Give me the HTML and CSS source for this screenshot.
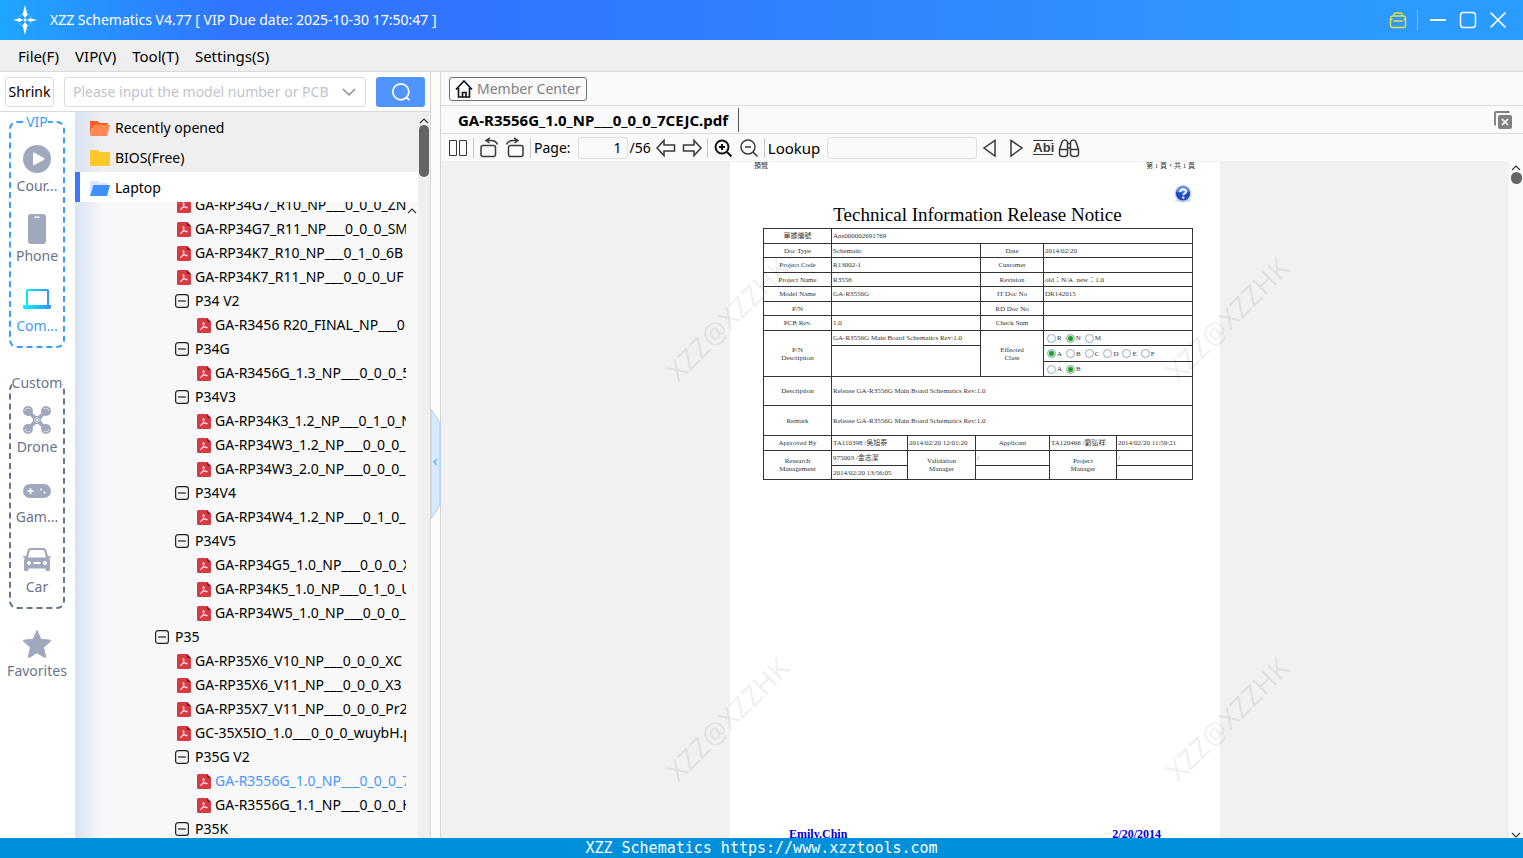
FILE: index.html
```html
<!DOCTYPE html>
<html lang="en">
<head>
<meta charset="utf-8">
<title>XZZ Schematics</title>
<link rel="stylesheet" href="styles.css">
</head>
<body>
<svg class="sprite" aria-hidden="true">
  <symbol id="pdf" viewBox="0 0 14 15"><path d="M1.500 0H10l4 4v9.500a1.500 1.500 0 0 1-1.500 1.500h-11A1.500 1.500 0 0 1 0 13.500v-12A1.500 1.500 0 0 1 1.500 0z" fill="#d63a43"/><path d="M10 0l4 4h-3a1 1 0 0 1-1-1z" fill="#8e1219"/><path d="M6.600 4.300c1 .2.400 2.300 0 3.300-.6 1.600-1.700 3.600-2.700 4-.9.200-.5-1 1-1.700 1.400-.7 3.800-1 5-.8 1 .3.300 1.100-.8.700-1.200-.5-2.700-2.200-3-3.600-.2-.9-.1-1.900.5-1.900z" fill="none" stroke="#fff" stroke-width=".8"/></symbol>
  <symbol id="minus" viewBox="0 0 14 14"><rect x=".6" y=".6" width="12.800" height="12.800" rx="2.500" fill="#f4f4f4" stroke="#222" stroke-width="1.200"/><path d="M3 7h8" stroke="#222" stroke-width="1.200"/></symbol>
  <symbol id="up" viewBox="0 0 10 6"><path d="M1 5l4-4 4 4" fill="none" stroke="#333" stroke-width="1.100"/></symbol>
  <symbol id="folder-open" viewBox="0 0 20 16"><path d="M0 1h8l1.500 2H18v5H2L0 15z" fill="var(--back)"/><path d="M3.500 5H20l-3 11H0z" fill="var(--front)"/></symbol>
</svg>

<header class="titlebar">
  <svg class="logo" viewBox="0 0 24 30"><circle cx="12" cy="15" r="6.500" fill="none" stroke="#7fbcff" stroke-width="1"/><path d="M12 0l2.500 9.500L12 13 9.500 9.500zM12 30l2.500-9.500L12 17l-2.500 3.500zM0 15l7-1.800L10 15l-3 1.800zM24 15l-7-1.800L14 15l3 1.800z" fill="#fff"/><circle cx="12" cy="15" r="1.500" fill="#fff"/></svg>
  <h1 class="title">XZZ Schematics V4.77 [ VIP Due date: 2025-10-30 17:50:47 ]</h1>
  <button class="win" aria-label="Toolbox"><svg viewBox="0 0 18 18"><path d="M5 5V3.500A1.500 1.500 0 0 1 6.500 2h5A1.500 1.500 0 0 1 13 3.500V5M3.500 5h11A2.500 2.500 0 0 1 16.500 7.500v7a2 2 0 0 1-2 2h-11a2 2 0 0 1-2-2v-7A2.500 2.500 0 0 1 3.500 5zM1.500 8.500h2M14.500 8.500h2M4.500 10h9" fill="none" stroke="#e6e23c" stroke-width="1.400"/></svg></button>
  <span class="win-sep"></span>
  <button class="win" aria-label="Minimize"><svg viewBox="0 0 18 18"><path d="M1 9h16" stroke="#fff" stroke-width="1.800"/></svg></button>
  <button class="win" aria-label="Maximize"><svg viewBox="0 0 18 18"><rect x="1.500" y="1.500" width="15" height="15" rx="3" fill="none" stroke="#fff" stroke-width="1.400"/></svg></button>
  <button class="win" aria-label="Close"><svg viewBox="0 0 18 18"><path d="M1.500 1.500l15 15M16.500 1.500l-15 15" stroke="#fff" stroke-width="1.700"/></svg></button>
</header>

<nav class="menubar">
  <button>File(F)</button><button>VIP(V)</button><button>Tool(T)</button><button>Settings(S)</button>
</nav>

<main class="workspace">
  <section class="side">
    <form class="search">
      <button type="button" class="shrink">Shrink</button>
      <div class="combo">
        <input type="text" aria-label="Model number" placeholder="Please input the model number or PCB">
        <svg class="chev" viewBox="0 0 14 8"><path d="M1 1l6 6 6-6" fill="none" stroke="#8a8f99" stroke-width="1.500"/></svg>
      </div>
      <button type="button" class="go" aria-label="Search"><svg viewBox="0 0 20 20"><circle cx="9.800" cy="9.800" r="8" fill="none" stroke="#fff" stroke-width="1.700"/><path d="M14.800 15l3.500 3" stroke="#fff" stroke-width="1.700"/></svg></button>
    </form>
    <div class="side-body">
      <nav class="rail">
        <fieldset class="group vip">
          <legend>VIP</legend>
          <button class="item"><svg viewBox="0 0 28 30"><circle cx="14" cy="15" r="14" fill="#a0a8bd"/><path d="M10 9.500q0-1.500 1.400-.8l9.500 5.300q1.300.8 0 1.700l-9.500 5.400q-1.400.7-1.400-.9z" fill="#fff"/></svg><span>Cour...</span></button>
          <button class="item"><svg viewBox="0 0 28 30"><rect x="5" y="0" width="18" height="30" rx="3" fill="#a0a8bd"/><path d="M12 3.300h4" stroke="#fff" stroke-width="1.400" stroke-linecap="round"/></svg><span>Phone</span></button>
          <button class="item on"><svg viewBox="0 0 28 30"><defs><linearGradient id="lg"><stop offset="0" stop-color="#00f6ff"/><stop offset="1" stop-color="#3a8dff"/></linearGradient></defs><path fill-rule="evenodd" d="M4.500 5h20q1.500 0 1.500 1.500V21h2v2.500q0 1.500-1.500 1.500h-25Q0 25 0 23.500V21h3V6.500Q3 5 4.500 5zM5 7v14h19V7z" fill="url(#lg)"/></svg><span>Com...</span></button>
        </fieldset>
        <fieldset class="group custom">
          <legend>Custom</legend>
          <button class="item"><svg viewBox="0 0 28 30"><g fill="#a0a8bd"><path d="M6 5l7 6h2l7-6 2 2-6 7v2l6 7-2 2-7-6h-2l-7 6-2-2 6-7v-2L4 7z"/><circle cx="5" cy="6" r="5"/><circle cx="23" cy="6" r="5"/><circle cx="5" cy="24" r="5"/><circle cx="23" cy="24" r="5"/></g><g fill="none" stroke="#e4e8f1" stroke-width=".8"><path d="M2.200 6a3 3 0 0 1 5.300-1.800M20.500 4.200a3 3 0 0 1 5.300 1.800M2.200 24a3 3 0 0 0 5.300 1.800M20.500 25.800a3 3 0 0 0 5.300-1.800"/><circle cx="14" cy="15" r="2.300"/></g><circle cx="14" cy="15" r=".9" fill="#fff"/></svg><span>Drone</span></button>
          <button class="item"><svg viewBox="0 0 28 30"><rect y="9" width="28" height="14" rx="7" fill="#a0a8bd"/><path d="M4.500 16h6M7.500 13v6" stroke="#fff" stroke-width="1.600"/><circle cx="18" cy="14.500" r="1.100" fill="#fff"/><circle cx="21.500" cy="17.500" r="1.100" fill="#fff"/></svg><span>Gam...</span></button>
          <button class="item"><svg viewBox="0 0 28 30"><path fill-rule="evenodd" fill="#a0a8bd" d="M7.500 3h13q2 0 2.700 2l2 6.500 2.300-1q1 1.800-1.300 2.800.8.700.8 2V25q0 1-1 1h-2.500q-1 0-1-1v-1.500h-17V25q0 1-1 1H2q-1 0-1-1v-9.700q0-1.300.8-2Q-.5 12.300.5 10.500l2.300 1 2-6.500Q5.500 3 7.500 3zM8 5q-1 0-1.300 1L5 12.500h18L21.300 6Q21 5 20 5zM6 16a2 2 0 1 0 .1 0zM22 16a2 2 0 1 0 .1 0zM10.500 17v2h7v-2z"/></svg><span>Car</span></button>
        </fieldset>
        <button class="item fav"><svg viewBox="0 0 28 30"><path d="M14 1.500l3.800 8.700 9.500 1q.8.200.3.900l-7 6.500 2 9.200q0 1-.9.600L14 23.700l-7.700 4.700q-.9.400-.9-.6l2-9.200-7-6.500q-.5-.7.300-.9l9.500-1z" fill="#a0a8bd" stroke="#a0a8bd" stroke-linejoin="round"/></svg><span>Favorites</span></button>
      </nav>
      <div class="browser">
        <div class="content">
          <button class="cat"><svg class="fold-o" viewBox="0 0 20 16"><use href="#folder-open"/></svg>Recently opened</button>
          <button class="cat"><svg viewBox="0 0 20 16"><path d="M0 0h8l1.500 2H20v14H0z" fill="#ffc82c"/></svg>BIOS(Free)</button>
          <button class="cat active"><svg class="fold-b" viewBox="0 0 20 16"><use href="#folder-open"/></svg>Laptop</button>
          <div class="tree-view">
            <ul class="tree">
              <li class="l2"><svg class="pdf"><use href="#pdf"/></svg><a href="#">GA-RP34G7_R10_NP___0_0_0_ZN</a></li>
              <li class="l2"><svg class="pdf"><use href="#pdf"/></svg><a href="#">GA-RP34G7_R11_NP___0_0_0_SM</a></li>
              <li class="l2"><svg class="pdf"><use href="#pdf"/></svg><a href="#">GA-RP34K7_R10_NP___0_1_0_6B</a></li>
              <li class="l2"><svg class="pdf"><use href="#pdf"/></svg><a href="#">GA-RP34K7_R11_NP___0_0_0_UF</a></li>
              <li class="l2"><svg class="box"><use href="#minus"/></svg><a href="#">P34 V2</a></li>
              <li class="l3"><svg class="pdf"><use href="#pdf"/></svg><a href="#">GA-R3456 R20_FINAL_NP___0</a></li>
              <li class="l2"><svg class="box"><use href="#minus"/></svg><a href="#">P34G</a></li>
              <li class="l3"><svg class="pdf"><use href="#pdf"/></svg><a href="#">GA-R3456G_1.3_NP___0_0_0_5</a></li>
              <li class="l2"><svg class="box"><use href="#minus"/></svg><a href="#">P34V3</a></li>
              <li class="l3"><svg class="pdf"><use href="#pdf"/></svg><a href="#">GA-RP34K3_1.2_NP___0_1_0_N</a></li>
              <li class="l3"><svg class="pdf"><use href="#pdf"/></svg><a href="#">GA-RP34W3_1.2_NP___0_0_0_</a></li>
              <li class="l3"><svg class="pdf"><use href="#pdf"/></svg><a href="#">GA-RP34W3_2.0_NP___0_0_0_</a></li>
              <li class="l2"><svg class="box"><use href="#minus"/></svg><a href="#">P34V4</a></li>
              <li class="l3"><svg class="pdf"><use href="#pdf"/></svg><a href="#">GA-RP34W4_1.2_NP___0_1_0_</a></li>
              <li class="l2"><svg class="box"><use href="#minus"/></svg><a href="#">P34V5</a></li>
              <li class="l3"><svg class="pdf"><use href="#pdf"/></svg><a href="#">GA-RP34G5_1.0_NP___0_0_0_X</a></li>
              <li class="l3"><svg class="pdf"><use href="#pdf"/></svg><a href="#">GA-RP34K5_1.0_NP___0_1_0_U</a></li>
              <li class="l3"><svg class="pdf"><use href="#pdf"/></svg><a href="#">GA-RP34W5_1.0_NP___0_0_0_</a></li>
              <li class="l1"><svg class="box"><use href="#minus"/></svg><a href="#">P35</a></li>
              <li class="l2"><svg class="pdf"><use href="#pdf"/></svg><a href="#">GA-RP35X6_V10_NP___0_0_0_XC</a></li>
              <li class="l2"><svg class="pdf"><use href="#pdf"/></svg><a href="#">GA-RP35X6_V11_NP___0_0_0_X3</a></li>
              <li class="l2"><svg class="pdf"><use href="#pdf"/></svg><a href="#">GA-RP35X7_V11_NP___0_0_0_Pr2</a></li>
              <li class="l2"><svg class="pdf"><use href="#pdf"/></svg><a href="#">GC-35X5IO_1.0___0_0_0_wuybH.p</a></li>
              <li class="l2"><svg class="box"><use href="#minus"/></svg><a href="#">P35G V2</a></li>
              <li class="l3 sel"><svg class="pdf"><use href="#pdf"/></svg><a href="#">GA-R3556G_1.0_NP___0_0_0_7</a></li>
              <li class="l3"><svg class="pdf"><use href="#pdf"/></svg><a href="#">GA-R3556G_1.1_NP___0_0_0_H</a></li>
              <li class="l2"><svg class="box"><use href="#minus"/></svg><a href="#">P35K</a></li>
            </ul>
            <svg class="caret"><use href="#up"/></svg>
          </div>
        </div>
        <div class="vbar"><svg class="caret"><use href="#up"/></svg><span class="thumb"></span></div>
      </div>
    </div>
  </section>

  <div class="splitter"><button class="handle" aria-label="Collapse panel"><svg viewBox="0 0 10 110"><path d="M0 .5l8 12q1 1 1 3v79q0 2-1 3l-8 12z" fill="#d8eaff" stroke="#9dcdf8"/><path d="M6 50L3 53l3 3" fill="none" stroke="#5cb0f2" stroke-width="1.300"/></svg></button></div>

  <section class="reader">
    <div class="top"><button class="member"><svg viewBox="0 0 18 18"><path d="M1 9.500L9 1l8 8.500M3.500 8v9h11V8M7.500 17v-4.500h3.500V17" fill="none" stroke="#111" stroke-width="1.600"/></svg>Member Center</button></div>
    <div class="tabs">
      <button class="tab">GA-R3556G_1.0_NP___0_0_0_7CEJC.pdf</button>
      <button class="close-all" aria-label="Close all"><svg viewBox="0 0 18 18"><path d="M1 14.500V2q0-1 1-1h13.500" fill="none" stroke="#808080" stroke-width="1.900"/><rect x="4" y="4" width="14" height="14" rx="2" fill="#808080"/><path d="M8 8l6 6M14 8l-6 6" stroke="#fff" stroke-width="1.700"/></svg></button>
    </div>
    <div class="tools">
      <button aria-label="Two pages"><svg class="thin" viewBox="0 0 22 22"><path d="M2.500 3.500h7v15h-7zM12.500 3.500h7v15h-7z"/></svg></button>
      <i class="sep"></i>
      <button aria-label="Rotate left"><svg viewBox="0 0 22 22"><rect x="3" y="8.500" width="14.500" height="11" rx="2"/><path d="M12 1L8 3.500 11.500 6M8.500 3.500H13q5 0 6.500 4"/></svg></button>
      <button aria-label="Rotate right"><svg viewBox="0 0 22 22"><rect x="4.500" y="8.500" width="14.500" height="11" rx="2"/><path d="M10 1l4 2.500L10.500 6M13.500 3.500H9q-5 0-6.500 4"/></svg></button>
      <i class="sep"></i>
      <label for="pg">Page:</label><input id="pg" class="page-no" type="text" value="1"><span class="total">/56</span>
      <button aria-label="Previous page"><svg viewBox="0 0 22 22"><path d="M2 11l7-7.500v4.500h10.500v6H9v4.500z"/></svg></button>
      <button aria-label="Next page"><svg viewBox="0 0 22 22"><path d="M20 11l-7-7.500v4.500H2.500v6H13v4.500z"/></svg></button>
      <i class="sep"></i>
      <button aria-label="Zoom in"><svg viewBox="0 0 22 22"><circle cx="10" cy="10" r="6.500" stroke="#111" stroke-width="2"/><path d="M15 15l4.500 4.500M7 10h6M10 7v6" stroke="#111" stroke-width="2"/></svg></button>
      <button aria-label="Zoom out"><svg viewBox="0 0 22 22"><circle cx="10" cy="10" r="7"/><path d="M15 15l4.500 4.500M7 10h6"/></svg></button>
      <i class="sep"></i>
      <label class="look-label" for="lk">Lookup</label><input id="lk" class="lookup" type="text">
      <button aria-label="Find previous"><svg viewBox="0 0 22 22"><path d="M16 3.500v15.500L5 11z"/></svg></button>
      <button aria-label="Find next"><svg viewBox="0 0 22 22"><path d="M6 3.500v15.500L17 11z"/></svg></button>
      <button class="abi">Abi</button>
      <button aria-label="Find"><svg viewBox="0 0 22 22"><path d="M1.500 12.500L4 5q.7-2 2.800-2T9.500 5v12q0 2.500-4 2.500t-4-2.500zM20.500 12.500L18 5q-.7-2-2.800-2t-2.700 2v12q0 2.500 4 2.500t4-2.500zM9.500 6.500h3M9.500 11h3M1.500 12.500h8M12.500 12.500h8"/></svg></button>
    </div>
    <div class="viewer">
      <article class="sheet">
        <div class="runhead"><span>預覽</span><span>第 1 頁，共 1 頁</span></div>
        <svg class="help" viewBox="0 0 18 18"><ellipse cx="9" cy="15.500" rx="8" ry="1.800" fill="#d5d8de"/><circle cx="9" cy="8.500" r="7.700" fill="#1c4cc0" stroke="#b9c9ec" stroke-width="1.200"/><path d="M2.500 7a6.500 6 0 0 1 13 0q-6 1-13 0z" fill="#5c8ae6"/><path d="M6.200 6.800q.3-2.500 3-2.500t2.800 2.200q0 1.400-1.500 2.100-1.200.6-1.200 1.600" fill="none" stroke="#fff" stroke-width="1.900"/><circle cx="9.300" cy="12.600" r="1.200" fill="#fff"/></svg>
        <h2>Technical Information Release Notice</h2>
        <table>
          <colgroup><col class="c68"><col class="c76"><col class="c68"><col class="c5"><col class="c63"><col class="c6"><col class="c67"><col class="c76"></colgroup>
          <tr class="a"><th>單據編號</th><td colspan="7">Ans000002691769</td></tr>
          <tr class="b"><th>Doc Type</th><td colspan="3">Schematic</td><th>Date</th><td colspan="3">2014/02/20</td></tr>
          <tr class="a"><th>Project Code</th><td colspan="3">R13002-1</td><th>Customer</th><td colspan="3"></td></tr>
          <tr class="b"><th>Project Name</th><td colspan="3">R3556</td><th>Revision</th><td colspan="3">old：N/A&nbsp; new：1.0</td></tr>
          <tr class="a"><th>Model Name</th><td colspan="3">GA-R3556G</td><th>IT Doc No</th><td colspan="3">DR142015</td></tr>
          <tr class="b"><th>P/N</th><td colspan="3"></td><th>RD Doc No</th><td colspan="3"></td></tr>
          <tr class="a"><th>PCB Rev.</th><td colspan="3">1.0</td><th>Check Sum</th><td colspan="3"></td></tr>
          <tr class="a"><th rowspan="3">P/N<br>Description</th><td colspan="3">GA-R3556G Main Board Schematics Rev:1.0</td><th rowspan="3">Effected<br>Class</th><td colspan="3"><div class="opts"><label><input type="radio" name="e1">R</label><label><input type="radio" name="e1" checked>N</label><label><input type="radio" name="e1">M</label></div></td></tr>
          <tr class="c"><td colspan="3" rowspan="2"></td><td colspan="3"><div class="opts"><label><input type="radio" name="e2" checked>A</label><label><input type="radio" name="e2">B</label><label><input type="radio" name="e2">C</label><label><input type="radio" name="e2">D</label><label><input type="radio" name="e2">E</label><label><input type="radio" name="e2">F</label></div></td></tr>
          <tr class="a"><td colspan="3"><div class="opts"><label><input type="radio" name="e3">A</label><label><input type="radio" name="e3" checked>B</label></div></td></tr>
          <tr class="d"><th>Description</th><td colspan="7">Release GA-R3556G Main Board Schematics Rev:1.0</td></tr>
          <tr class="e"><th>Remark</th><td colspan="7">Release GA-R3556G Main Board Schematics Rev:1.0</td></tr>
          <tr class="a"><th>Approved By</th><td>TA110398 /吳旭泰</td><td>2014/02/20 12:01:20</td><th colspan="3">Applicant</th><td>TA120466 /劉弘祥</td><td>2014/02/20 11:59:21</td></tr>
          <tr class="a"><th rowspan="2">Research<br>Management</th><td>975003 /金志潔</td><th rowspan="2">Validation<br>Manager</th><td colspan="3">/</td><th rowspan="2">Project<br>Manager</th><td>/</td></tr>
          <tr class="b"><td>2014/02/20 13:56:05</td><td colspan="3"></td><td></td></tr>
        </table>
        <div class="sign"><span>Emily.Chin</span><span>2/20/2014</span></div>
      </article>
      <span class="mark m1">XZZ@XZZHK</span><span class="mark m2">XZZ@XZZHK</span><span class="mark m3">XZZ@XZZHK</span><span class="mark m4">XZZ@XZZHK</span>
      <div class="vbar right"><svg class="caret"><use href="#up"/></svg><span class="thumb"></span><svg class="caret down"><use href="#up"/></svg></div>
    </div>
  </section>
</main>
<footer class="status">XZZ Schematics https://www.xzztools.com</footer>
</body>
</html>
```
FILE: styles.css
```css
* { box-sizing: border-box; }
html, body { height: 100%; }
body {
  margin: 0;
  display: flex;
  flex-direction: column;
  overflow: hidden;
  font: 14px/20px "Noto Sans", "Noto Sans CJK SC", sans-serif;
  color: #000;
  background: #f0f0f0;
}
button, input { font: inherit; color: inherit; }
button { border: 0; padding: 0; background: none; white-space: nowrap; }
a { color: inherit; text-decoration: none; }
svg { display: block; flex: none; }
.sprite { position: absolute; width: 0; height: 0; }

.titlebar {
  flex: none;
  display: flex;
  align-items: center;
  height: 40px;
  padding: 0 16px 0 13px;
  color: #fff;
  background: linear-gradient(90deg, #1fa6ff 0, #3175ff 15%, #3175ff 32%, #2e98ff 85%, #2a9cff 100%);
}
.logo { width: 24px; height: 30px; }
.title { flex: 1; margin: 0 0 0 13px; font-size: 14px; font-weight: 400; }
.win svg { width: 18px; height: 18px; }
.win + .win { margin-left: 12px; }
.win-sep { width: 1px; height: 20px; margin: 0 11px 0 10px; background: #7fbfff; }

.menubar {
  flex: none;
  display: flex;
  gap: 16px;
  height: 32px;
  padding: 0 18px;
  background: #efefef;
  border-bottom: 1px solid #d9d9d9;
  font-size: 15px;
}

.workspace { flex: 1; min-height: 0; display: flex; }
.side { flex: none; width: 431px; display: flex; flex-direction: column; border-right: 1px solid #d6d6d6; background: #fff; }
.search { flex: none; display: flex; align-items: center; height: 40px; margin: 0; padding: 0 5px; border-bottom: 1px solid #d9d9d9; }
.shrink { width: 49px; height: 30px; border: 1px solid #dcdcdc; border-radius: 3px; }
.combo { flex: 1; display: flex; align-items: center; height: 30px; margin: 0 10px; padding: 0 9px 0 8px; border: 1px solid #dcdcdc; border-radius: 3px; }
.combo input { flex: 1; min-width: 0; border: 0; padding: 0; outline: 0; background: none; }
.combo input::placeholder { color: #c0c4cc; opacity: 1; }
.chev { width: 14px; height: 8px; }
.go { display: grid; place-items: center; width: 49px; height: 30px; border-radius: 3px; background: #5095ff; }
.go svg { width: 20px; height: 20px; }
.side-body { flex: 1; min-height: 0; display: flex; }

.rail { flex: none; width: 75px; padding-right: 1px; display: flex; flex-direction: column; align-items: center; background: #fff; color: #68748a; }
.group { width: 56px; min-width: 0; margin: 0; padding: 12px 0 10px; border: 2px dashed #68748a; border-radius: 8px; display: flex; flex-direction: column; gap: 18px; align-items: center; }
.group legend { margin: 0 auto; padding: 0; }
.vip { border-color: #3b9dff; }
.vip legend { color: #3b9dff; }
.custom { margin-top: 25px; }
.item { display: flex; flex-direction: column; align-items: center; gap: 2px; }
.item svg { width: 28px; height: 30px; }
.item.on { color: #3b9dff; }
.fav { margin-top: 20px; }

.browser { flex: 1; min-width: 0; display: flex; background: #efefef; }
.content { flex: 1; min-width: 0; display: flex; flex-direction: column; background: linear-gradient(90deg, #d9e3f3 0, #efefef 28px); }
.cat { flex: none; display: flex; align-items: center; gap: 5px; height: 30px; padding: 2px 0 0 15px; }
.cat svg { width: 20px; height: 16px; }
.active { background: #fff; border-left: 5px solid #3d77ff; padding-left: 10px; }
.fold-o { --back: #fb6226; --front: #ff8855; }
.fold-b { --back: #dbe5fb; --front: #3d92ff; }
.tree-view { position: relative; flex: 1; min-height: 0; overflow: hidden; padding-right: 12px; background: linear-gradient(90deg, #d9e3f3 0, #f8f8f8 28px); }
.tree { list-style: none; margin: -9px 0 0; padding: 0; overflow: hidden; }
.tree li { display: flex; align-items: center; height: 24px; white-space: nowrap; }
.pdf { width: 14px; height: 15px; margin: 0 4px 0 2px; }
.box { width: 14px; height: 14px; margin-right: 6px; }
.l1 { padding-left: 80px; }
.l2 { padding-left: 100px; }
.l3 { padding-left: 120px; }
.sel a { color: #4a97ff; }
.caret { width: 10px; height: 6px; }
.tree-view .caret { position: absolute; top: 6px; right: 1px; }
.vbar { flex: none; width: 12px; display: flex; flex-direction: column; align-items: center; padding-top: 6px; }
.thumb { width: 10px; height: 52px; margin-top: 1px; border-radius: 5px; background: #646464; }

.splitter { flex: none; position: relative; width: 10px; background: #f9fff9; border-right: 1px solid #d6d6d6; }
.handle { position: absolute; left: 0; top: 44%; width: 10px; height: 110px; }
.handle svg { width: 10px; height: 110px; }

.reader { flex: 1; min-width: 0; display: flex; flex-direction: column; background: #fafafa; }
.top { flex: none; display: flex; align-items: center; height: 34px; padding-left: 8px; border-bottom: 1px solid #dcdcdc; }
.member { display: flex; align-items: center; gap: 4px; height: 24px; padding: 0 5px; border: 1px solid #707070; border-radius: 3px; color: #808080; }
.member svg { width: 18px; height: 18px; }
.tabs { flex: none; display: flex; align-items: center; justify-content: space-between; height: 28px; padding: 0 11px 0 8px; border-bottom: 1px solid #dcdcdc; }
.tab { height: 24px; padding: 0 10px 0 9px; border-right: 1px solid #555; font-size: 15px; font-weight: 700; }
.close-all svg { width: 18px; height: 18px; }
.tools { flex: none; display: flex; align-items: center; height: 27px; padding-left: 4px; }
.tools button { width: 26px; height: 24px; display: grid; place-items: center; }
.tools svg { width: 22px; height: 22px; fill: none; stroke: #3a3a3a; stroke-width: 1.5; }
.tools .thin { stroke-width: 1; }
.sep { width: 1px; height: 20px; margin: 0 2px; background: #c9c9c9; }
.tools input { height: 22px; border: 1px solid #dedede; border-radius: 3px; background: #fafafa; }
.tools label { margin-left: 1px; }
.tools .look-label { margin-left: 1px; font-size: 15px; }
.page-no { width: 50px; margin: 0 2px 0 7px; padding: 0 5px; text-align: right; }
.total { margin-right: 2px; }
.lookup { width: 150px; margin-left: 7px; }
.tools .abi { font: 700 13px/13px "Liberation Sans", sans-serif; color: #3a3a3a; width: 20px; height: 15px; margin: 0 3px 0 4px; border: solid #3a3a3a; border-width: 1px 0; }

.viewer { flex: 1; min-height: 0; position: relative; display: flex; justify-content: center; overflow: hidden; background: #f1f1f1; }
.sheet { position: relative; width: 490px; margin: 1px auto 0; padding: 0 28px 0 33px; background: #fff; font: 7px/8px "Liberation Serif", "Noto Sans CJK TC", serif; color: #333; }
.runhead { display: flex; justify-content: space-between; margin: 0 -3px 0 -9px; }
.help { width: 18px; height: 18px; margin: 15px 0 0 auto; }
.sheet h2 { margin: 2px 0 4px; text-align: center; font: 400 19px/19px "Liberation Serif", serif; color: #000; white-space: nowrap; }
table { width: 100%; table-layout: fixed; border-collapse: collapse; }
.c68 { width: 68px; } .c76 { width: 76px; } .c5 { width: 5px; } .c63 { width: 63px; } .c6 { width: 6px; } .c67 { width: 67px; }
th, td { border: 1px solid #333; padding: 0 0 0 1px; font-weight: 400; text-align: left; white-space: nowrap; line-height: 8px; }
th { text-align: center; padding: 0; }
.a { height: 15px; } .b { height: 14px; } .c { height: 16px; } .d { height: 29px; } .e { height: 30px; }
.opts { display: flex; gap: 4px; padding-left: 2px; }
.opts label { display: flex; align-items: center; gap: 1px; }
.opts input { appearance: none; width: 9px; height: 9px; margin: 0; border: 1px solid #8fa9c4; border-radius: 50%; background: #fff; }
.opts input:checked { background: radial-gradient(#21a121 0 2px, #c8ecc8 3px); }
.sign { display: flex; justify-content: space-between; margin: 346px 31px 0 26px; font: 700 12px/16px "Liberation Serif", serif; color: #0000e0; }
.mark { position: absolute; width: 160px; height: 28px; text-align: center; font-size: 28px; line-height: 28px; color: rgba(0, 0, 0, .08); transform: rotate(-45deg); }
.m1, .m3 { left: calc(50% - 335px); }
.m2, .m4 { left: calc(50% + 165px); }
.m1, .m2 { top: 144px; }
.m3, .m4 { top: 544px; }
.right { width: 14px; padding-top: 4px; background: #fafafa; }
.right .thumb { width: 11px; height: 12px; border-radius: 6px; }
.down { margin-top: auto; transform: scaleY(-1); }
.status { flex: none; height: 20px; text-align: center; font: 15px/20px "DejaVu Sans Mono", monospace; color: #fff; background: #0090da; }
```
